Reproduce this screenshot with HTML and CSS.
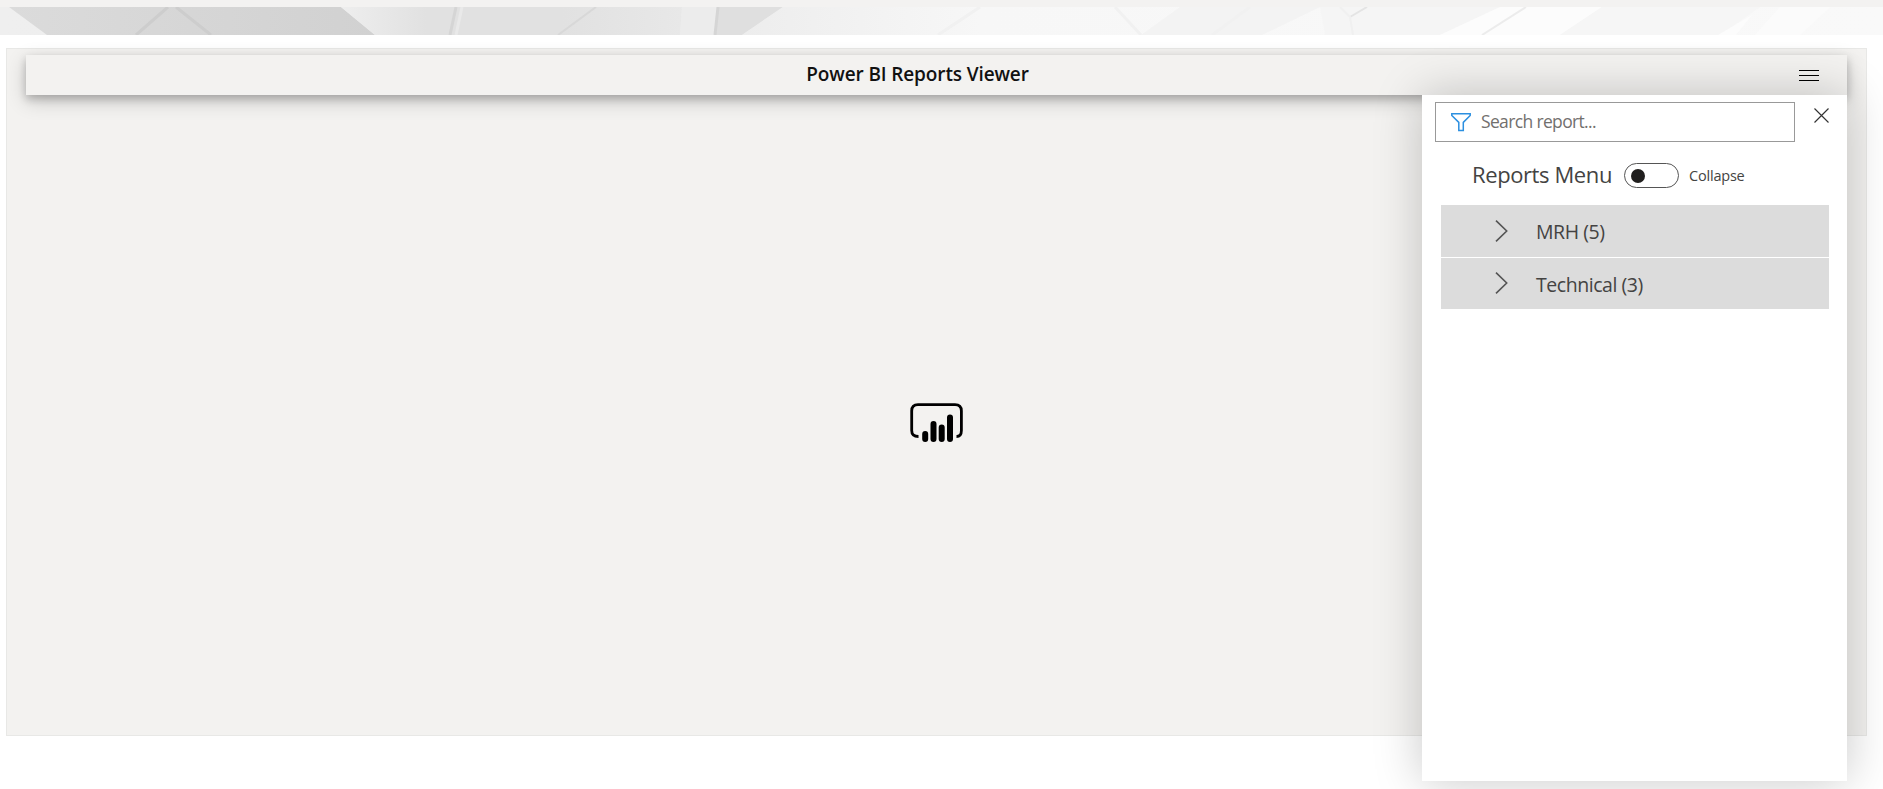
FILE: index.html
```html
<!DOCTYPE html>
<html lang="en">
<head>
<meta charset="utf-8">
<title>Power BI Reports Viewer</title>
<link rel="stylesheet" href="styles.css">
</head>
<body>
<svg class="banner" width="1883" height="28" viewBox="0 0 1883 28" preserveAspectRatio="none" aria-hidden="true">
  <defs>
    <linearGradient id="base"><stop offset="0" stop-color="#efefef"/><stop offset=".4" stop-color="#ececec"/><stop offset=".52" stop-color="#f7f7f7"/><stop offset="1" stop-color="#f9f9f9"/></linearGradient>
    <linearGradient id="dark"><stop offset="0" stop-color="#dbdbdb"/><stop offset="1" stop-color="#d1d1d1"/></linearGradient>
    <linearGradient id="mid"><stop offset="0" stop-color="#eeeeee"/><stop offset=".25" stop-color="#e1e1e1"/><stop offset=".65" stop-color="#e1e1e1"/><stop offset="1" stop-color="#e8e8e8"/></linearGradient>
    <linearGradient id="fade"><stop offset="0" stop-color="#ededed"/><stop offset="1" stop-color="#f7f7f7"/></linearGradient>
  </defs>
  <rect width="1883" height="28" fill="url(#base)"/>
  <path d="M9 0H341L375 28H47Z" fill="url(#dark)"/>
  <path d="M341 0H682L680 28H375Z" fill="url(#mid)"/>
  <path d="M682 0H717L714 28H680Z" fill="#ececec"/>
  <path d="M718 0H783L742 28H715Z" fill="#dfdfdf"/>
  <path d="M783 0H980L938 28H742Z" fill="url(#fade)"/>
  <path d="M1180 0H1320L1262 28H1141Z" fill="#f3f3f3"/>
  <path d="M1320 0H1500L1440 28H1325Z" fill="#f5f5f5"/>
  <path d="M1500 0H1602L1560 28H1440Z" fill="#fcfcfc"/>
  <path d="M1602 0H1760L1720 28H1560Z" fill="#f6f6f6"/>
  <path d="M1752 8L1718 28H1736Z" fill="#fcfcfc"/>
  <path d="M1780 0H1830L1800 28H1755Z" fill="#fbfbfb"/>
  <g fill="none" stroke-width="3">
    <path d="M168 0L136 28M176 0L211 28" stroke="#cdcdcd"/>
    <path d="M456 0L450 28M718 0L715 28" stroke="#d5d5d5"/>
    <path d="M462 0L456 28" stroke="#e9e9e9"/>
    <path d="M596 0L558 28" stroke="#d8d8d8" stroke-width="2"/>
    <path d="M980 0L938 28M1115 0L1141 28M1250 0L1212 28" stroke="#f1f1f1"/>
    <path d="M1367 0L1350 10" stroke="#e4e4e4" stroke-width="2"/>
    <path d="M1340 0L1350 10L1353 28" stroke="#f0f0f0" stroke-width="2"/>
    <path d="M1526 0L1482 28" stroke="#ececec" stroke-width="2"/>
  </g>
</svg>
<main class="viewer">
  <header class="bar">
    <h1 class="bar-title">Power BI Reports Viewer</h1>
    <svg class="menu-icon" width="20" height="12" viewBox="0 0 20 12"><path d="M0 .5H20M0 5.5H20M0 10.5H20" stroke="#000"/></svg>
  </header>
  <div class="stage">
    <svg class="logo" width="54" height="40" viewBox="0 0 54 40">
      <path d="M8.5 33.5C4 33.5 1.7 31 1.7 27.500V8C1.700 4 4 1.700 8 1.700H45C49 1.700 51.400 4 51.400 8V27.500C51.400 31 50 33.500 46.500 33.500" fill="none" stroke="#000" stroke-width="2.8"/>
      <path d="M15.200 31V36M23.500 21V36M31.700 24.500V36M40 14.500V36" fill="none" stroke="#000" stroke-width="6" stroke-linecap="round"/>
    </svg>
  </div>
  <aside class="panel">
    <div class="search-row">
      <label class="search">
        <svg width="20" height="19" viewBox="0 0 20 19"><path d="M.8 .8H19.200V2.500L12.300 9.400V17.500H7.800V9.400L.8 2.500Z" fill="#fff" stroke="#2b8fe0" stroke-width="1.5"/></svg>
        <span class="placeholder">Search report...</span>
      </label>
      <svg class="close" width="15" height="15" viewBox="0 0 15 15"><path d="M.5 .5L14.500 14.500M14.500 .5L.5 14.500" stroke="#333" stroke-width="1.15"/></svg>
    </div>
    <div class="menu-head">
      <h2 class="menu-title">Reports Menu</h2>
      <span class="toggle"><span class="knob"></span></span>
      <span class="toggle-label">Collapse</span>
    </div>
    <ul class="groups">
      <li class="group"><svg class="chevron" width="13" height="22" viewBox="0 0 13 22"><path d="M1 .7L11.700 11L1 21.300" fill="none" stroke="#555" stroke-width="1.6"/></svg><span class="group-name">MRH (5)</span></li>
      <li class="group"><svg class="chevron" width="13" height="22" viewBox="0 0 13 22"><path d="M1 .7L11.700 11L1 21.300" fill="none" stroke="#555" stroke-width="1.6"/></svg><span class="group-name">Technical (3)</span></li>
    </ul>
  </aside>
</main>
</body>
</html>
```
FILE: styles.css
```css
* { box-sizing: border-box; }
body {
  margin: 0;
  height: 789px;
  overflow: hidden;
  background: #fff;
  border-top: 7px solid #f3f2f1;
  font-family: "Open Sans", "Noto Sans", sans-serif;
  color: #444342;
}
.banner { display: block; }
.viewer {
  position: relative;
  width: 1861px;
  height: 688px;
  margin: 13px 0 0 6px;
  padding: 6px 19px 0;
  background: #f3f2f0;
  border: 1px solid #e8e8e6;
}
.bar {
  display: flex;
  align-items: center;
  height: 40px;
  padding-right: 28px;
  background: #f3f2f0;
  box-shadow: 0 4px 8px 0 rgba(0, 0, 0, .2), 0 6px 20px 0 rgba(0, 0, 0, .19);
}
.bar-title {
  flex: 1;
  margin: 0;
  padding: 0 0 2px 10px;
  text-align: center;
  font-size: 19px;
  line-height: 28px;
  font-weight: 600;
  letter-spacing: -.12px;
  color: #111;
}
.menu-icon { margin-top: 2px; }
.stage { padding: 308px 0 0 884px; }
.logo { display: block; }
.panel {
  position: absolute;
  top: 46px;
  right: 19px;
  width: 425px;
  height: 686px;
  padding: 7px 18px 0 13px;
  background: #fff;
  box-shadow: 0 0 45px rgba(0, 0, 0, .22);
}
.search-row { display: flex; gap: 19px; }
.search {
  display: flex;
  align-items: center;
  gap: 10px;
  width: 360px;
  height: 40px;
  padding-left: 15px;
  border: 1px solid #999;
}
.placeholder { padding-bottom: 2px; font-size: 17.5px; letter-spacing: -.65px; color: #72706e; }
.close { margin-top: 6px; }
.menu-head {
  display: flex;
  align-items: center;
  height: 63px;
  padding: 4px 0 0 37px;
}
.menu-title { width: 152px; margin: 0; padding-bottom: 4px; font-size: 22px; line-height: 30px; font-weight: 400; letter-spacing: -.4px; white-space: nowrap; }
.toggle {
  width: 55px;
  height: 25px;
  padding: 5px 6px;
  border: 1px solid #555;
  border-radius: 13px;
}
.knob { display: block; width: 14px; height: 14px; border-radius: 50%; background: #201f1e; }
.toggle-label { margin-left: 10px; padding-bottom: 1px; font-size: 14.5px; letter-spacing: -.2px; }
.groups {
  display: grid;
  grid-template-rows: 52px 51px;
  gap: 1px;
  margin: 0 0 0 6px;
  padding: 0;
  list-style: none;
}
.group {
  display: flex;
  align-items: center;
  gap: 28px;
  padding-left: 54px;
  background: #dcdcdc;
  font-size: 19.5px;
  letter-spacing: -.45px;
}
.chevron { margin-top: -1px; }
.group-name { padding-top: 1px; }
```
